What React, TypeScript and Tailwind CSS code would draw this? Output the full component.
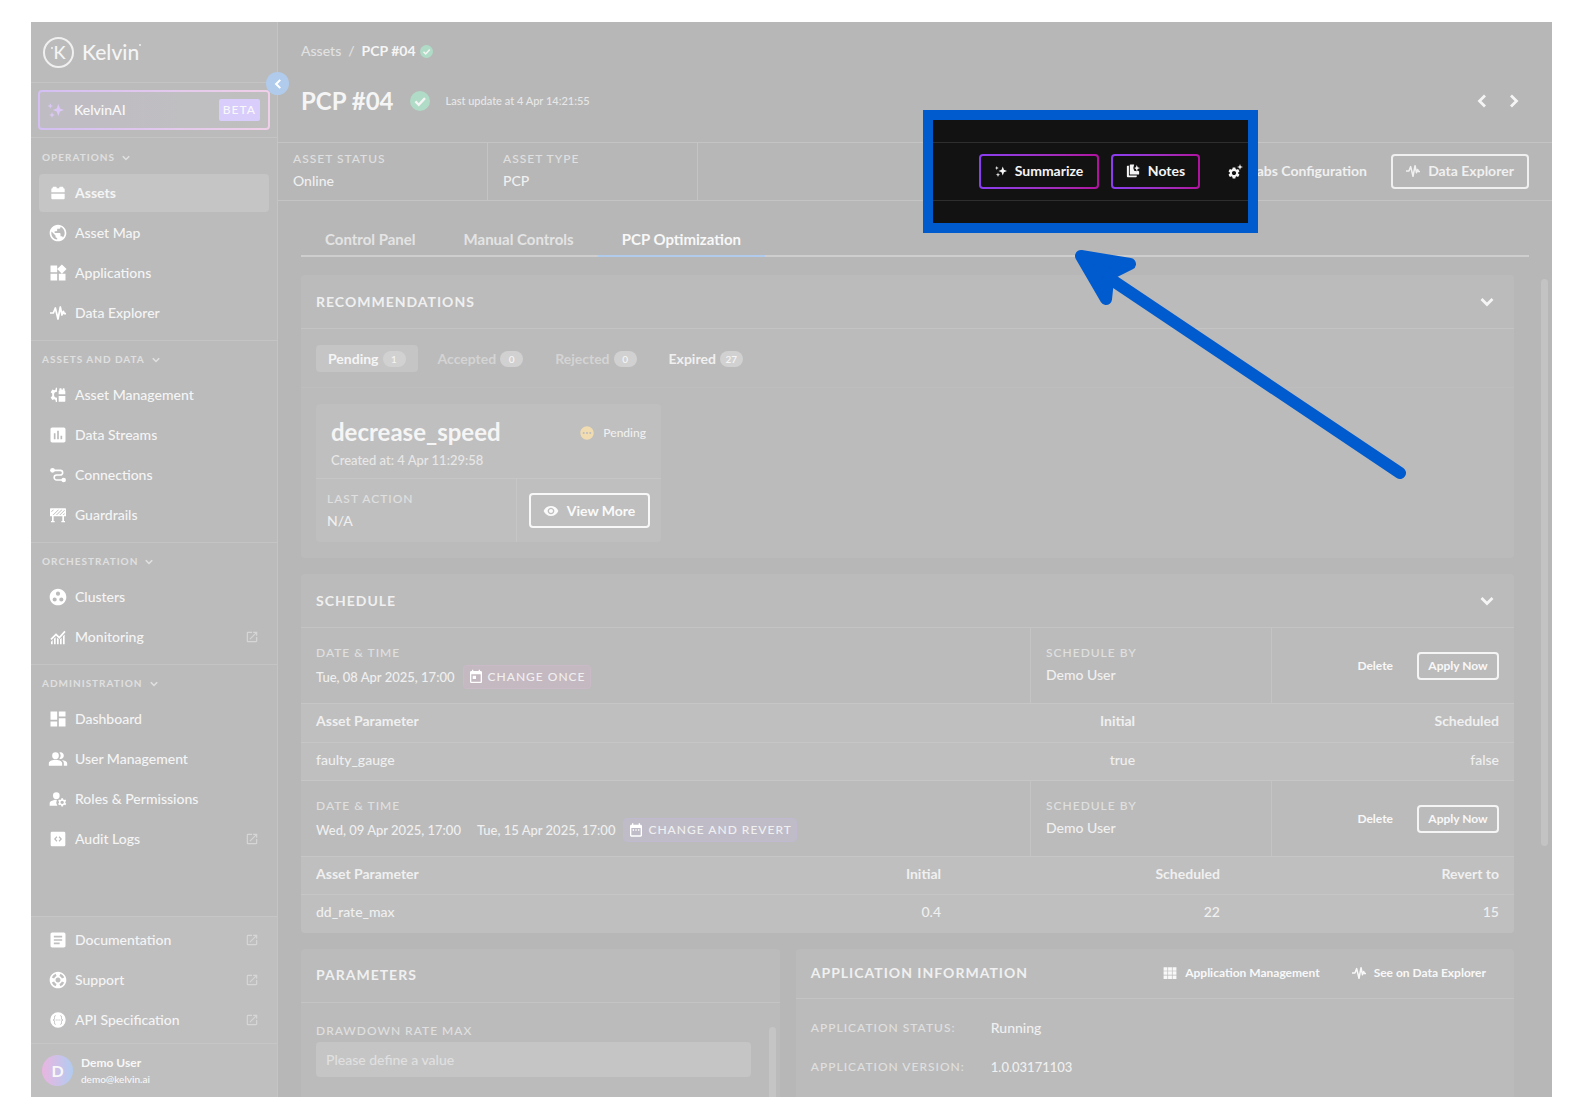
import type { ReactNode } from 'react';
import clsx from 'clsx';
import {
  MdPublic,
  MdWidgets,
  MdInsertChart,
  MdGroupWork,
  MdDashboard,
  MdPeopleAlt,
  MdManageAccounts,
  MdArticle,
  MdSupport,
  MdOpenInNew,
  MdVisibility,
  MdPending,
  MdToday,
  MdDateRange,
  MdSettings,
} from 'react-icons/md';

type IconProps = { className?: string };

function Svg({ className, children }: IconProps & { children: ReactNode }) {
  return (
    <svg viewBox="0 0 24 24" fill="currentColor" className={className} aria-hidden="true">
      {children}
    </svg>
  );
}

const ChevronIcon = ({ className }: IconProps) => (
  <Svg className={className}>
    <path d="M6.500 9l5.500 5.500L17.500 9" fill="none" stroke="currentColor" strokeWidth="2.800" />
  </Svg>
);

const WaveIcon = ({ className }: IconProps) => (
  <Svg className={className}>
    <path
      d="M0 12h5L8 4.500l4 16.500 3.500-18 2.500 12 2-5.500 1.500 3.500H24"
      fill="none"
      stroke="currentColor"
      strokeWidth="2.600"
      strokeLinejoin="round"
    />
  </Svg>
);

const BrickIcon = ({ className }: IconProps) => (
  <Svg className={className}>
    <path d="M2 11V6.500A1.500 1.500 0 0 1 3.500 5H4V3.500a1 1 0 0 1 1-1h4a1 1 0 0 1 1 1V5h4V3.500a1 1 0 0 1 1-1h4a1 1 0 0 1 1 1V5h.5A1.500 1.500 0 0 1 22 6.500V11zM2 13h20v7a1.500 1.500 0 0 1-1.500 1.500h-17A1.500 1.500 0 0 1 2 20z" />
  </Svg>
);

const AssetGearIcon = ({ className }: IconProps) => (
  <Svg className={className}>
    <path d="M10.500 1H8.800l-.6 3-1.800 1-2.900-1.100L1 7.700l2.300 2v3.800L1 15.600l2.500 4 2.900-1.200 1.800 1 .6 3.100h1.700v-6.300a4.300 4.300 0 0 1 0-8.900z" />
    <path d="M13 11V5.500h1V3a1 1 0 0 1 1-1h1.500a1 1 0 0 1 1 1v1H19V3a1 1 0 0 1 1-1h1a1 1 0 0 1 1 1v2.500h1V11zM13 13.500h10V21a1 1 0 0 1-1 1h-9z" />
  </Svg>
);

const ConnectionsIcon = ({ className }: IconProps) => (
  <Svg className={className}>
    <circle cx="3.800" cy="5" r="3.600" />
    <circle cx="20.500" cy="19.500" r="3.400" />
    <path
      d="M5 5h10.500a3.500 3.500 0 0 1 0 7h-5.500a3.500 3.500 0 0 0 0 7.500H20"
      fill="none"
      stroke="currentColor"
      strokeWidth="2.400"
    />
  </Svg>
);

const BarrierIcon = ({ className }: IconProps) => (
  <Svg className={className}>
    <path
      fillRule="evenodd"
      d="M0 3a1 1 0 0 1 1-1h22a1 1 0 0 1 1 1v11H21v7h1.500v2h-5.500v-2h1.500v-7h-13v7H7v2H1.500v-2H3v-7H0zM2 8l4-4H4.500L2 6.500zM4 12h1.500l8-8H12zM9 12h1.500l8-8H17zM14 12h1.500l6.500-6.500V4zM19 12h1.500l1.500-1.500V9z"
    />
  </Svg>
);

const MonitoringIcon = ({ className }: IconProps) => (
  <Svg className={className}>
    <path
      d="M1.500 15.500 9 8l5 5L22.500 3.500"
      fill="none"
      stroke="currentColor"
      strokeWidth="2.500"
    />
    <path d="M1.500 19 4 16.500V23H1.500zM6 14.500l2.500-2.300V23H6zM10.500 13l2.500 2.500V23h-2.500zM15 15.500l2.500-2.500V23H15zM19.500 11l2.500-2.800V23h-2.500z" />
  </Svg>
);

const CodeBoxIcon = ({ className }: IconProps) => (
  <Svg className={className}>
    <path
      fillRule="evenodd"
      d="M3 1h18a2 2 0 0 1 2 2v18a2 2 0 0 1-2 2H3a2 2 0 0 1-2-2V3a2 2 0 0 1 2-2zM9.800 8 6 12l3.800 4 1.200-1.200L8.500 12 11 9.200zM14.200 8 13 9.200l2.500 2.800-2.500 2.800 1.200 1.200L18 12z"
    />
  </Svg>
);

const ApiIcon = ({ className }: IconProps) => (
  <Svg className={className}>
    <circle cx="12" cy="12" r="11.500" />
    <g className="stroke-[#bfbfbf]" fill="none" strokeWidth="1.500">
      <path d="M8.500 5.500C6 5.500 6.800 8 6.800 9.500S6 12 4.500 12c1.500 0 2.300 1 2.300 2.500s-.8 4 1.700 4M15.500 5.500c2.500 0 1.700 2.500 1.700 4s.8 2.500 2.300 2.500c-1.500 0-2.300 1-2.300 2.500s.8 4-1.700 4" />
      <path d="M8.500 12h7" strokeDasharray="1.600 1.100" />
    </g>
  </Svg>
);

const SparkleIcon = ({ className }: IconProps) => (
  <Svg className={className}>
    <path d="M15.500 3l2.400 6.600 6.100 2.400-6.100 2.400-2.400 6.600-2.400-6.600L7 12l6.100-2.400z" />
    <path d="M3.500 2l1.100 2.900L7.500 6 4.600 7.100 3.500 10 2.400 7.100-.5 6l2.900-1.100zM6 15l1.200 3.300L10.500 19.500l-3.300 1.200L6 24l-1.200-3.300L1.500 19.500l3.300-1.200z" />
  </Svg>
);

const NotesIcon = ({ className }: IconProps) => (
  <Svg className={className}>
    <path d="M2.500 3H5v16.500h13.500V21a1.500 1.500 0 0 1-1.500 1.500H3A1.500 1.500 0 0 1 1.500 21V4a1 1 0 0 1 1-1z" />
    <path d="M7.500 1H14l-1.500 6L14 11.500l4 1 2-1.500 2.500 2V17a1 1 0 0 1-1 1h-14a1 1 0 0 1-1-1V2a1 1 0 0 1 1-1z" />
    <path d="M18.500 1.500l1.500 4 4 1.500-4 1.500-1.500 4-1.500-4-3-1.500 3-1.500z" />
  </Svg>
);

const GridIcon = ({ className }: IconProps) => (
  <Svg className={className}>
    <path d="M1 2h6.600v6H1zM8.700 2h6.600v6H8.700zM16.400 2H23v6h-6.600zM1 9.200h6.600v6H1zM8.700 9.200h6.600v6H8.700zM16.400 9.200H23v6h-6.600zM1 16.400h6.600v6H1zM8.700 16.400h6.600v6H8.700zM16.400 16.400H23v6h-6.600z" />
  </Svg>
);

const CheckIcon = ({ className }: IconProps) => (
  <Svg className={className}>
    <circle cx="12" cy="12" r="12" className="fill-[#b0dbc6]" />
    <path d="M6.500 12.500l4 4 7.500-8" fill="none" stroke="currentColor" strokeWidth="2.800" />
  </Svg>
);

const GearSparkIcon = ({ className }: IconProps) => (
  <span className={clsx('relative flex size-4 items-end', className)}>
    <MdSettings className="size-3.5" />
    <Svg className="absolute right-0 top-0 size-1.5">
      <path d="M12 0l3 9 9 3-9 3-3 9-3-9-9-3 9-3z" />
    </Svg>
  </span>
);

type NavItem = {
  label: string;
  icon: (props: IconProps) => ReactNode;
  active?: boolean;
  external?: boolean;
};

const navGroups: { title: string; items: NavItem[] }[] = [
  {
    title: 'OPERATIONS',
    items: [
      { label: 'Assets', icon: BrickIcon, active: true },
      { label: 'Asset Map', icon: MdPublic },
      { label: 'Applications', icon: MdWidgets },
      { label: 'Data Explorer', icon: WaveIcon },
    ],
  },
  {
    title: 'ASSETS AND DATA',
    items: [
      { label: 'Asset Management', icon: AssetGearIcon },
      { label: 'Data Streams', icon: MdInsertChart },
      { label: 'Connections', icon: ConnectionsIcon },
      { label: 'Guardrails', icon: BarrierIcon },
    ],
  },
  {
    title: 'ORCHESTRATION',
    items: [
      { label: 'Clusters', icon: MdGroupWork },
      { label: 'Monitoring', icon: MonitoringIcon, external: true },
    ],
  },
  {
    title: 'ADMINISTRATION',
    items: [
      { label: 'Dashboard', icon: MdDashboard },
      { label: 'User Management', icon: MdPeopleAlt },
      { label: 'Roles & Permissions', icon: MdManageAccounts },
      { label: 'Audit Logs', icon: CodeBoxIcon, external: true },
    ],
  },
];

const footerItems: NavItem[] = [
  { label: 'Documentation', icon: MdArticle, external: true },
  { label: 'Support', icon: MdSupport, external: true },
  { label: 'API Specification', icon: ApiIcon, external: true },
];

// The Material glyphs carry a wide inner margin, so they get a larger box
const customIcons = [WaveIcon, BrickIcon, AssetGearIcon, ConnectionsIcon, BarrierIcon, MonitoringIcon, CodeBoxIcon, ApiIcon];

function NavLink({ item }: { item: NavItem }) {
  const Icon = item.icon;
  return (
    <a
      href="#"
      className={clsx(
        'flex h-[38px] items-center gap-2 rounded px-2.5 text-sm text-[#f5f5f5]',
        item.active && 'bg-[#c5c5c5] font-bold',
      )}
    >
      <span className="flex w-[18px] justify-center text-white">
        <Icon className={clsx('shrink-0', customIcons.includes(Icon) ? 'size-4' : 'size-5')} />
      </span>
      <span className="flex-1">{item.label}</span>
      {item.external && <MdOpenInNew className="size-3.5 text-[#d6d6d6]" />}
    </a>
  );
}

function Sidebar() {
  return (
    <aside className="relative flex w-[247px] shrink-0 flex-col border-r border-[#c4c4c4] bg-[#bbbbbb]">
      <div className="flex h-[61px] shrink-0 items-center gap-2 border-b border-[#c4c4c4] px-3 text-[#f5f5f5]">
        <span className="flex size-[31px] items-center justify-center rounded-full border-2 border-[#f0f0f0] text-lg">
          <span className="mb-2 size-0.5 rounded-full bg-[#f0f0f0]" />K
        </span>
        <span className="flex items-start text-[21px]/6">
          Kelvin
          <span className="mt-1 size-0.5 rounded-full bg-[#f0f0f0]" />
        </span>
      </div>
      <button
        type="button"
        aria-label="Collapse sidebar"
        className="absolute -right-3 top-[50px] z-10 flex size-[23px] items-center justify-center rounded-full bg-[#b0cbec] text-white"
      >
        <ChevronIcon className="size-[18px] rotate-90" />
      </button>

      <div className="border-b border-[#c4c4c4] px-[7px] py-[7px]">
        <a
          href="#"
          className="block rounded bg-linear-to-r from-[#d3bff2] to-[#efd0e8] p-0.5 text-sm text-[#f8f8f8]"
        >
          <span className="flex h-9 items-center rounded-xs bg-linear-to-r from-[#bfbcc4] to-[#bfbfbf] pl-2 pr-2">
            <SparkleIcon className="mr-2.5 size-4 text-[#dcc8f6]" />
            <span className="flex-1">KelvinAI</span>
            <span className="rounded-xs bg-[#d8cdfb] px-1 text-xs/[22px] tracking-[1px]">BETA</span>
          </span>
        </a>
      </div>

      <nav className="flex-1 pt-px">
        {navGroups.map((group, i) => (
          <div
            key={group.title}
            className={clsx('px-2 pb-2', i < navGroups.length - 1 && 'border-b border-[#c4c4c4]')}
          >
            <button
              type="button"
              className="flex h-[35px] items-center gap-1 pl-[3px] pt-0.5 text-[10px] font-bold tracking-[1px] text-[#e0e0e0]"
            >
              {group.title}
              <ChevronIcon className="size-3.5" />
            </button>
            <div className="flex flex-col gap-0.5">
              {group.items.map((item) => (
                <NavLink key={item.label} item={item} />
              ))}
            </div>
          </div>
        ))}
      </nav>

      <div className="bg-[#bfbfbf]">
        <div className="flex flex-col gap-0.5 border-y border-[#c6c6c6] px-2 py-1">
          {footerItems.map((item) => (
            <NavLink key={item.label} item={item} />
          ))}
        </div>
        <div className="flex h-[53px] items-center gap-2 px-[11px] text-[#f8f8f8]">
          <span className="flex size-[31px] items-center justify-center rounded-full bg-linear-to-r from-[#e8b5e0] to-[#b0cbf0] font-bold">
            D
          </span>
          <div>
            <p className="text-xs/4 font-bold">Demo User</p>
            <p className="text-[10px]/4">demo@kelvin.ai</p>
          </div>
        </div>
      </div>
    </aside>
  );
}

function Label({ children }: { children: ReactNode }) {
  return <p className="text-xs/[22px] tracking-[1px] text-[#e0e0e0]">{children}</p>;
}

// Dark spotlight over the toolbar with the two highlighted actions
function Spotlight() {
  return (
    <div className="absolute -top-[33px] right-[294px] z-10 w-[335px] border-10 border-[#005bce] bg-[#121212] py-[22px]">
      <div className="flex h-[59px] items-center border-y border-[#2e2e2e] pl-[46px] text-sm font-bold text-[#f5f5f5]">
        <button type="button" className="mr-3 rounded bg-linear-to-r from-[#8a3df0] to-[#b0119f] p-0.5">
          <span className="flex h-[31px] w-[116px] items-center justify-center gap-2 rounded-xs bg-[#121212] pb-0.5">
            <SparkleIcon className="size-3" />
            Summarize
          </span>
        </button>
        <button type="button" className="rounded bg-linear-to-r from-[#8a3df0] to-[#b0119f] p-0.5">
          <span className="flex h-[31px] w-[85px] items-center justify-center gap-2 rounded-xs bg-[#121212] pb-0.5">
            <NotesIcon className="size-3.5" />
            Notes
          </span>
        </button>
        <GearSparkIcon className="ml-[27px]" />
      </div>
    </div>
  );
}

function Arrow() {
  return (
    <svg
      viewBox="0 0 340 240"
      className="pointer-events-none absolute left-[795px] top-[222px] z-20 h-[240px] w-[340px]"
      fill="#005bce"
      stroke="#005bce"
      strokeLinecap="round"
      strokeLinejoin="round"
    >
      <path d="M30 30 327 229" strokeWidth="12" />
      <path d="M8 12 57 20 39 29 35 36 33 55Z" strokeWidth="12" />
    </svg>
  );
}

function PageHeader() {
  return (
    <header className="shrink-0 pl-[23px] pr-[26px] text-[#f5f5f5]">
      <nav aria-label="Breadcrumb" className="flex h-[58px] items-center gap-[7px] text-sm">
        <a href="#" className="text-[#e2e2e2]">
          Assets
        </a>
        <span className="text-[#e2e2e2]">/</span>
        <span className="flex items-center gap-1 font-bold">
          PCP #04
          <CheckIcon className="size-[13px]" />
        </span>
      </nav>
      <div className="flex h-[62px] items-center pb-5">
        <h1 className="text-2xl font-bold">PCP #04</h1>
        <CheckIcon className="ml-4 size-5" />
        <p className="ml-4 flex-1 text-[11px] text-[#e8e8e8]">Last update at 4 Apr 14:21:55</p>
        <button type="button" aria-label="Previous asset">
          <ChevronIcon className="size-6 rotate-90" />
        </button>
        <button type="button" aria-label="Next asset" className="ml-2">
          <ChevronIcon className="size-6 -rotate-90" />
        </button>
      </div>
    </header>
  );
}

function StatusBar() {
  return (
    <div className="relative flex h-[59px] shrink-0 border-y border-[#c4c4c4] text-sm text-[#f0f0f0]">
      <div className="w-[210px] border-r border-[#c4c4c4] pl-[15px] pt-[5px]">
        <Label>ASSET STATUS</Label>
        <p className="leading-[22px]">Online</p>
      </div>
      <div className="w-[210px] border-r border-[#c4c4c4] pl-[15px] pt-[5px]">
        <Label>ASSET TYPE</Label>
        <p className="leading-[22px]">PCP</p>
      </div>
      <div className="flex flex-1 items-center justify-end gap-6 pr-[23px] font-bold">
        <button type="button" className="pb-0.5">
          Labs Configuration
        </button>
        <button
          type="button"
          className="flex h-[35px] w-[138px] items-center justify-center gap-2 rounded border-2 border-[#f0f0f0] pb-0.5"
        >
          <WaveIcon className="size-3.5" />
          Data Explorer
        </button>
      </div>
      <Spotlight />
    </div>
  );
}

const tabs = ['Control Panel', 'Manual Controls', 'PCP Optimization'];

function Tabs() {
  return (
    <div role="tablist" className="ml-[23px] mr-[23px] flex shrink-0 border-b-2 border-[#cecece] pt-6">
      {tabs.map((tab) => (
        <button
          key={tab}
          type="button"
          role="tab"
          aria-selected={tab === 'PCP Optimization'}
          className={clsx(
            '-mb-0.5 border-b-2 px-6 pb-0.5 text-[15px]/[28px] font-bold',
            tab === 'PCP Optimization' ? 'border-[#b0cbec] text-[#f8f8f8]' : 'border-transparent text-[#e4e4e4]',
          )}
        >
          {tab}
        </button>
      ))}
    </div>
  );
}

function Card({ className, children }: { className?: string; children: ReactNode }) {
  return (
    <section className={clsx('shrink-0 overflow-hidden rounded bg-[#bbbbbb] text-sm text-[#f0f0f0]', className)}>
      {children}
    </section>
  );
}

function CardHeader({ title, children }: { title: string; children?: ReactNode }) {
  return (
    <div className="flex h-[54px] items-center justify-between border-b border-[#c4c4c4] pl-[15px] pr-[15px]">
      <h2 className="text-sm font-bold tracking-[1px]">{title}</h2>
      {children}
    </div>
  );
}

function CollapseButton() {
  return (
    <button type="button" aria-label="Collapse" className="text-[#f5f5f5]">
      <ChevronIcon className="size-6" />
    </button>
  );
}

const filters = [
  { label: 'Pending', count: 1, className: 'bg-[#c5c5c5] text-[#f5f5f5]' },
  { label: 'Accepted', count: 0, className: 'text-[#d4d4d4]' },
  { label: 'Rejected', count: 0, className: 'text-[#d4d4d4]' },
  { label: 'Expired', count: 27, className: 'text-[#f0f0f0]' },
];

function Recommendations() {
  return (
    <Card>
      <CardHeader title="RECOMMENDATIONS">
        <CollapseButton />
      </CardHeader>
      <div className="flex gap-2 border-b border-[#bebebe] px-[15px] pb-[15px] pt-4">
        {filters.map((f) => (
          <button
            key={f.label}
            type="button"
            className={clsx('flex h-[27px] items-center gap-1 rounded px-3 font-bold', f.className)}
          >
            {f.label}
            <span className="w-[23px] rounded-full bg-[#d1d1d1] text-center text-[10px]/4 font-medium text-[#f5f5f5]">
              {f.count}
            </span>
          </button>
        ))}
      </div>
      <div className="px-[15px] py-4">
        <div className="w-[345px] rounded bg-[#bfbfbf]">
          <div className="flex h-[75px] justify-between border-b border-[#c6c6c6] px-[15px] pt-3.5">
            <div>
              <h3 className="text-2xl/7 font-bold text-[#f5f5f5]">decrease_speed</h3>
              <p className="text-[13px]/7 text-[#e8e8e8]">Created at: 4 Apr 11:29:58</p>
            </div>
            <p className="flex h-[30px] items-center gap-2 text-xs">
              <MdPending className="size-4 text-[#f0dcb0]" />
              Pending
            </p>
          </div>
          <div className="flex h-[63px]">
            <div className="w-[201px] border-r border-[#c6c6c6] pl-[11px] pt-[9px]">
              <Label>LAST ACTION</Label>
              <p className="leading-[22px]">N/A</p>
            </div>
            <div className="flex flex-1 items-center justify-center">
              <button
                type="button"
                className="flex h-[35px] w-[121px] items-center justify-center gap-2 rounded border-2 border-[#f8f8f8] font-bold text-[#fafafa]"
              >
                <MdVisibility className="size-4" />
                View More
              </button>
            </div>
          </div>
        </div>
      </div>
    </Card>
  );
}

type Entry = {
  dates: string[];
  tag: string;
  revert?: boolean;
  columns: string[];
  row: string[];
};

const entries: Entry[] = [
  {
    dates: ['Tue, 08 Apr 2025, 17:00'],
    tag: 'CHANGE ONCE',
    columns: ['Asset Parameter', 'Initial', 'Scheduled'],
    row: ['faulty_gauge', 'true', 'false'],
  },
  {
    dates: ['Wed, 09 Apr 2025, 17:00', 'Tue, 15 Apr 2025, 17:00'],
    tag: 'CHANGE AND REVERT',
    revert: true,
    columns: ['Asset Parameter', 'Initial', 'Scheduled', 'Revert to'],
    row: ['dd_rate_max', '0.4', '22', '15'],
  },
];

function ScheduleEntry({ entry }: { entry: Entry }) {
  const TagIcon = entry.revert ? MdDateRange : MdToday;
  const firstCol = entry.revert ? 'w-[31%]' : 'w-2/5';
  const otherCol = entry.revert ? 'w-[23%]' : 'w-[30%]';
  return (
    <>
      <div className="flex h-[75px]">
        <div className="flex-1 pl-[15px] pt-3.5">
          <Label>DATE &amp; TIME</Label>
          <div className="mt-px flex items-center gap-4 text-[13px]">
            <span>{entry.dates[0]}</span>
            {entry.dates[1] && <span>{entry.dates[1]}</span>}
            <span
              className={clsx(
                '-ml-2 flex items-center gap-1 rounded border px-1 text-xs/[22px] tracking-[1px]',
                entry.revert ? 'border-[#c0b9cf] bg-[#bfbcc8]' : 'border-[#cab9c7] bg-[#c4b8c1]',
              )}
            >
              <TagIcon className="size-4 text-white" />
              {entry.tag}
            </span>
          </div>
        </div>
        <div className="w-[242px] border-x border-[#c4c4c4] pl-[15px] pt-3.5">
          <Label>SCHEDULE BY</Label>
          <p className="leading-[22px]">Demo User</p>
        </div>
        <div className="flex w-[242px] items-center justify-end gap-6 pr-[15px] text-xs font-bold text-[#f8f8f8]">
          <button type="button">Delete</button>
          <button type="button" className="h-7 w-[82px] rounded border-2 border-[#f5f5f5]">
            Apply Now
          </button>
        </div>
      </div>
      <table className="w-full table-fixed bg-[#bfbfbf]">
        <thead>
          <tr className="border-y border-[#c6c6c6]">
            {entry.columns.map((c, i) => (
              <th
                key={c}
                className={clsx(
                  'px-[15px] pb-1 font-bold',
                  entry.revert ? 'h-[38px]' : 'h-[39px]',
                  i === 0 ? 'text-left' : 'text-right',
                  i === 0 ? firstCol : otherCol,
                )}
              >
                {c}
              </th>
            ))}
          </tr>
        </thead>
        <tbody>
          <tr className={clsx(!entry.revert && 'border-b border-[#c6c6c6]')}>
            {entry.row.map((v, i) => (
              <td key={v} className={clsx('h-[38px] px-[15px] pb-1', i > 0 && 'text-right')}>
                {v}
              </td>
            ))}
          </tr>
        </tbody>
      </table>
    </>
  );
}

function Schedule() {
  return (
    <Card>
      <CardHeader title="SCHEDULE">
        <CollapseButton />
      </CardHeader>
      {entries.map((entry) => (
        <ScheduleEntry key={entry.tag} entry={entry} />
      ))}
    </Card>
  );
}

function BottomPanels() {
  return (
    <div className="flex flex-1 gap-4">
      <Card className="min-w-0 flex-2">
        <CardHeader title="PARAMETERS" />
        <div className="flex">
          <div className="flex-1 pl-[15px] pr-[18px] pt-[17px]">
            <label htmlFor="drawdown" className="block text-xs/[22px] tracking-[1px] text-[#e0e0e0]">
              DRAWDOWN RATE MAX
            </label>
            <input
              id="drawdown"
              placeholder="Please define a value"
              className="h-[35px] w-full rounded bg-[#c5c5c5] px-2.5 placeholder:text-[#e0e0e0]"
            />
          </div>
          <div className="mr-1 mt-6 h-24 w-[7px] rounded-full bg-[#c5c5c5]" />
        </div>
      </Card>
      <Card className="min-w-0 flex-3">
        <div className="flex h-[50px] items-center border-b border-[#c4c4c4] pl-[15px] pr-7 text-xs font-bold text-[#f8f8f8]">
          <h2 className="flex-1 text-sm font-bold tracking-[1px] text-[#f0f0f0]">APPLICATION INFORMATION</h2>
          <a href="#" className="flex items-center gap-2">
            <GridIcon className="size-3.5" />
            Application Management
          </a>
          <a href="#" className="ml-8 flex items-center gap-2">
            <WaveIcon className="size-3.5" />
            See on Data Explorer
          </a>
        </div>
        <dl className="grid grid-cols-[180px_1fr] gap-y-[17px] pl-[15px] pt-[18px] leading-[22px]">
          <dt className="text-xs/[22px] tracking-[1px] text-[#e0e0e0]">APPLICATION STATUS:</dt>
          <dd>Running</dd>
          <dt className="text-xs/[22px] tracking-[1px] text-[#e0e0e0]">APPLICATION VERSION:</dt>
          <dd className="text-[13px]">1.0.03171103</dd>
        </dl>
      </Card>
    </div>
  );
}

export default function App() {
  return (
    <div className="flex h-screen bg-white pb-[23px] pl-[31px] pr-8 pt-[22px] font-[Lato,'Liberation_Sans',sans-serif] font-medium">
      <Sidebar />
      <main className="relative flex min-w-0 flex-1 flex-col bg-[#b7b7b7]">
        <PageHeader />
        <StatusBar />
        <Tabs />
        <div className="flex min-h-0 flex-1 pt-[18px]">
          <div className="flex flex-1 flex-col gap-4 overflow-hidden pl-[23px]">
            <Recommendations />
            <Schedule />
            <BottomPanels />
          </div>
          <div className="ml-[27px] mr-1 mt-1 h-[567px] w-[7px] rounded-full bg-[#c3c3c3]" />
        </div>
        <Arrow />
      </main>
    </div>
  );
}
